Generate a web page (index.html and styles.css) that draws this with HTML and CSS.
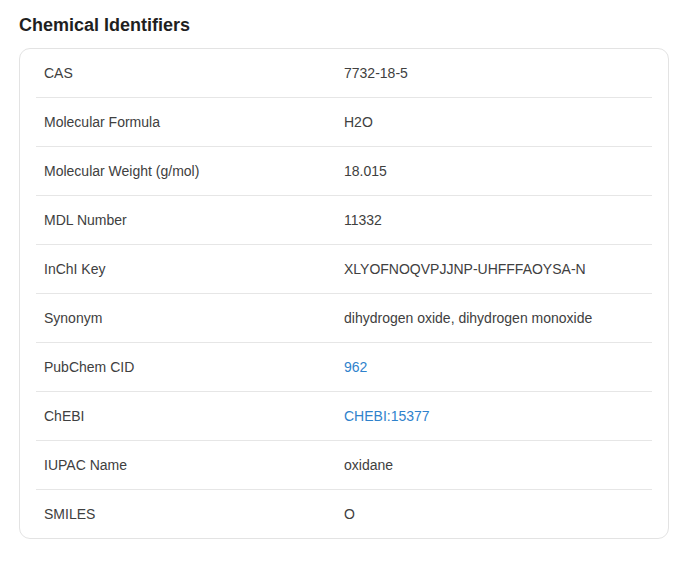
FILE: index.html
```html
<!DOCTYPE html>
<html>
<head>
<meta charset="utf-8">
<link rel="stylesheet" href="styles.css">
</head>
<body>
<section class="panel">
  <h2 class="title">Chemical Identifiers</h2>
  <div class="card">
    <table class="ids">
      <colgroup><col class="col-label"><col class="col-value"></colgroup>
      <tbody>
        <tr><td>CAS</td><td>7732-18-5</td></tr>
        <tr><td>Molecular Formula</td><td>H2O</td></tr>
        <tr><td>Molecular Weight (g/mol)</td><td>18.015</td></tr>
        <tr><td>MDL Number</td><td>11332</td></tr>
        <tr><td>InChI Key</td><td>XLYOFNOQVPJJNP-UHFFFAOYSA-N</td></tr>
        <tr><td>Synonym</td><td>dihydrogen oxide, dihydrogen monoxide</td></tr>
        <tr><td>PubChem CID</td><td><a class="link" href="#">962</a></td></tr>
        <tr><td>ChEBI</td><td><a class="link" href="#">CHEBI:15377</a></td></tr>
        <tr><td>IUPAC Name</td><td>oxidane</td></tr>
        <tr><td>SMILES</td><td>O</td></tr>
      </tbody>
    </table>
  </div>
</section>
</body>
</html>
```

FILE: styles.css
```css
html, body {
  margin: 0;
  padding: 0;
  background: #fff;
}
body {
  font-family: "Liberation Sans", Arial, sans-serif;
  color: #333;
}
.panel {
  padding: 13px 23px 0 19px;
}
.title {
  margin: 0 0 11px 0;
  font-size: 18px;
  font-weight: 700;
  color: #1f1f1f;
  line-height: 24px;
}
.card {
  border: 1px solid #e3e3e3;
  border-radius: 11px;
  padding: 0 16px;
}
.ids {
  width: 100%;
  border-collapse: collapse;
  table-layout: fixed;
}
.col-label {
  width: 300px;
}
.ids td {
  height: 48px;
  padding: 0 8px;
  font-size: 14px;
  color: #404040;
  vertical-align: middle;
  border-bottom: 1px solid #e6e6e6;
}
.ids tr:last-child td {
  border-bottom: none;
}
.link {
  color: #2f82cc;
  text-decoration: none;
}
```
